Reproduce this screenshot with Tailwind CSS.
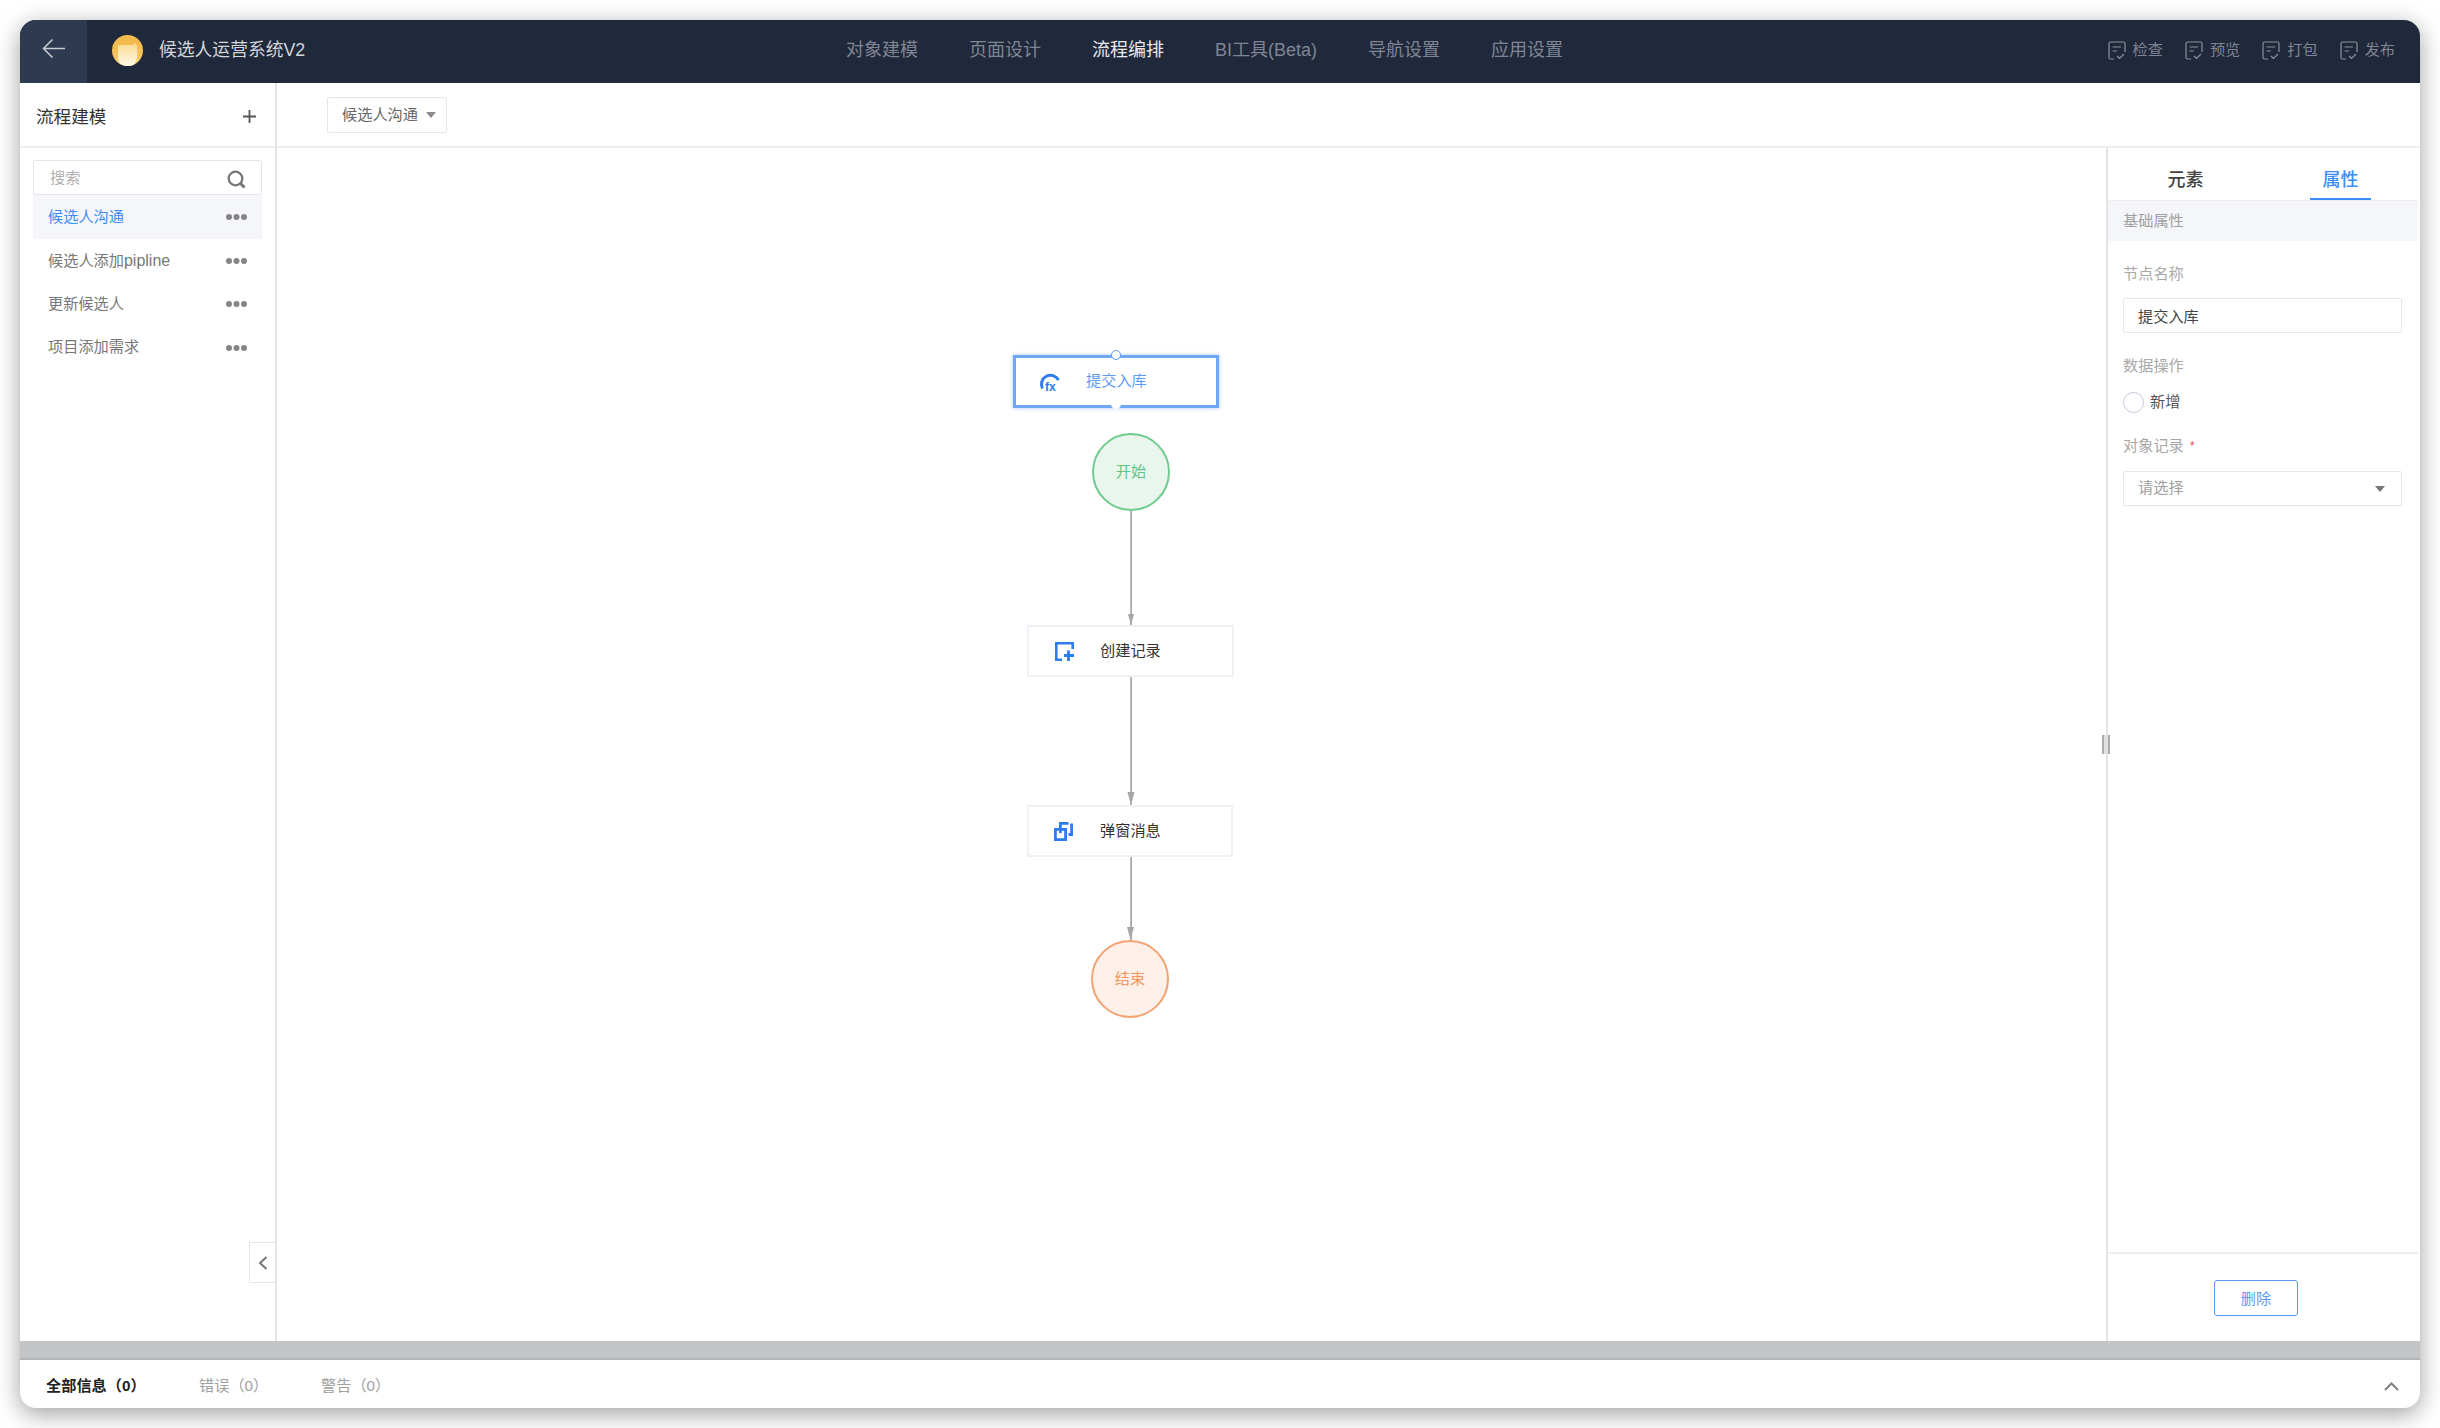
<!DOCTYPE html>
<html lang="zh-CN">
<head>
  <meta charset="UTF-8" />
  <title>候选人运营系统V2</title>
  <script src="https://cdn.jsdelivr.net/npm/@tailwindcss/browser@4"></script>
</head>
<body class="bg-white h-[1428px] w-[2440px] overflow-hidden font-['Liberation_Sans','Noto_Sans_CJK_SC',sans-serif] text-[15.2px] text-[#333]">
  <div class="mx-[20px] mt-[20px] w-[2400px] h-[1388px] rounded-[16px] bg-white flex flex-col overflow-hidden shadow-[0_6px_24px_rgba(0,0,0,0.38)]">

    <!-- Header -->
    <header class="h-[63px] shrink-0 bg-[#20293c] flex items-center">
      <div class="w-[67px] h-full bg-[#2e3a50] flex items-center justify-center pb-[6px]">
        <svg width="24" height="22" viewBox="0 0 24 22" fill="none" stroke="#c9ccd3" stroke-width="1.5"><path d="M23 10.5H2M10.5 1.5L1.5 10.5L10.5 19.5"/></svg>
      </div>
      <div class="w-[759px] flex items-center pl-[25px] pb-[2px]">
        <svg width="31" height="31" viewBox="0 0 31 31">
          <defs><linearGradient id="logo" x1="0" y1="0" x2="0" y2="1"><stop offset="0.3" stop-color="#f3bb4e"/><stop offset="1" stop-color="#f8cf72"/></linearGradient>
          <linearGradient id="paper" x1="0" y1="0" x2="0" y2="1"><stop offset="0" stop-color="#fbd98f"/><stop offset="1" stop-color="#fffbe9"/></linearGradient></defs>
          <circle cx="15.5" cy="15.5" r="15.5" fill="url(#logo)"/>
          <path d="M6 10h15l2-2 2 3v11q0 9-9 9h-2q-8-1-8-9z" fill="url(#paper)"/>
        </svg>
        <span class="ml-[16px] text-[17.8px] text-[#d4d6db]">候选人运营系统V2</span>
      </div>
      <nav class="flex items-center gap-[51px] text-[18px] text-[#7f8592] pb-[2px]">
        <a>对象建模</a>
        <a>页面设计</a>
        <a class="text-[#e9eaed]">流程编排</a>
        <a>BI工具(Beta)</a>
        <a>导航设置</a>
        <a>应用设置</a>
      </nav>
      <div class="ml-auto pr-[25px] pb-[2px] flex items-center gap-[22px] text-[#7f8592]">
        <div class="flex items-center gap-[7px]">
          <svg width="18" height="19" viewBox="0 0 18 19" fill="none" stroke="#8b909c" stroke-width="1.2"><path d="M6 18H2.5Q1 18 1 16.5V2.500Q1 1 2.500 1H15.500Q17 1 17 2.500V11M4.500 6H13M4.500 10H9M9 15L11.500 17.500L16 13"/></svg>
          <span>检查</span>
        </div>
        <div class="flex items-center gap-[7px]">
          <svg width="18" height="19" viewBox="0 0 18 19" fill="none" stroke="#8b909c" stroke-width="1.2"><path d="M6 18H2.5Q1 18 1 16.5V2.500Q1 1 2.500 1H15.500Q17 1 17 2.500V11M4.500 6H13M4.500 10H9M9 15L11.500 17.500L16 13"/></svg>
          <span>预览</span>
        </div>
        <div class="flex items-center gap-[7px]">
          <svg width="18" height="19" viewBox="0 0 18 19" fill="none" stroke="#8b909c" stroke-width="1.2"><path d="M6 18H2.5Q1 18 1 16.5V2.500Q1 1 2.500 1H15.500Q17 1 17 2.500V11M4.500 6H13M4.500 10H9M9 15L11.500 17.500L16 13"/></svg>
          <span>打包</span>
        </div>
        <div class="flex items-center gap-[7px]">
          <svg width="18" height="19" viewBox="0 0 18 19" fill="none" stroke="#8b909c" stroke-width="1.2"><path d="M6 18H2.5Q1 18 1 16.5V2.500Q1 1 2.500 1H15.500Q17 1 17 2.500V11M4.500 6H13M4.500 10H9M9 15L11.500 17.500L16 13"/></svg>
          <span>发布</span>
        </div>
      </div>
    </header>

    <!-- Body -->
    <div class="flex flex-1 min-h-0">

      <!-- Left sidebar -->
      <aside class="relative w-[257px] shrink-0 border-r-[2px] border-[#e4e4e4] flex flex-col">
        <div class="h-[65px] border-b-[2px] border-[#eeeeee] flex items-center justify-between pl-[16px] pr-[19px] pt-[3px]">
          <span class="text-[17.6px] text-[#333] mt-[3px]">流程建模</span>
          <svg width="13" height="13" viewBox="0 0 13 13" stroke="#555" stroke-width="1.8"><path d="M6.500 0V13M0 6.500H13"/></svg>
        </div>
        <div class="mx-[13px] mt-[12px]">
          <div class="h-[35px] border border-[#e2e4ec] rounded-[2px] flex items-center justify-between pl-[16px] pr-[15px]">
            <span class="text-[#b0b0b0] mt-[1px]">搜索</span>
            <svg class="mt-[4px]" width="19" height="19" viewBox="0 0 19 19" fill="none" stroke="#777" stroke-width="2.300"><circle cx="8.500" cy="8.500" r="6.800"/><path d="M13.500 13.500L17.500 17.500" stroke-width="3"/></svg>
          </div>
          <div class="h-[44px] bg-[#f5f6fa] flex items-center justify-between pl-[15px] pr-[15px] text-[#3d8cf5]">
            <span>候选人沟通</span>
            <svg width="21" height="6" viewBox="0 0 21 6" fill="#858585"><circle cx="3" cy="3" r="3"/><circle cx="10.500" cy="3" r="3"/><circle cx="18" cy="3" r="3"/></svg>
          </div>
          <div class="h-[43.500px] flex items-center justify-between pl-[15px] pr-[15px] text-[#777]">
            <span>候选人添加<span class="text-[16px]">pipline</span></span>
            <svg width="21" height="6" viewBox="0 0 21 6" fill="#858585"><circle cx="3" cy="3" r="3"/><circle cx="10.500" cy="3" r="3"/><circle cx="18" cy="3" r="3"/></svg>
          </div>
          <div class="h-[43.500px] flex items-center justify-between pl-[15px] pr-[15px] text-[#777]">
            <span>更新候选人</span>
            <svg width="21" height="6" viewBox="0 0 21 6" fill="#858585"><circle cx="3" cy="3" r="3"/><circle cx="10.500" cy="3" r="3"/><circle cx="18" cy="3" r="3"/></svg>
          </div>
          <div class="h-[43.500px] flex items-center justify-between pl-[15px] pr-[15px] text-[#777]">
            <span>项目添加需求</span>
            <svg width="21" height="6" viewBox="0 0 21 6" fill="#858585"><circle cx="3" cy="3" r="3"/><circle cx="10.500" cy="3" r="3"/><circle cx="18" cy="3" r="3"/></svg>
          </div>
        </div>
        <!-- collapse tab -->
        <div class="absolute right-0 top-[1159px] w-[26px] h-[41px] bg-white border border-r-0 border-[#e4e4e4] flex items-center justify-center">
          <svg width="10" height="14" viewBox="0 0 10 14" fill="none" stroke="#777" stroke-width="2"><path d="M8.500 1L2 7L8.500 13"/></svg>
        </div>
      </aside>

      <div class="flex-1 min-w-0 flex flex-col">
        <!-- Toolbar -->
        <div class="h-[65px] shrink-0 border-b-[2px] border-[#eeeeee] pl-[50px] pt-[14px]">
          <div class="w-[120px] h-[36px] border-[1.5px] border-[#e6e7ee] rounded-[2px] flex items-center pl-[14px] gap-[8px] text-[#666]">
            <span>候选人沟通</span>
            <svg width="10" height="6" viewBox="0 0 10 6" fill="#8a8a8a"><path d="M0 0H10L5 6Z"/></svg>
          </div>
        </div>

        <div class="flex-1 min-h-0 flex">
          <!-- Flow canvas -->
          <div class="relative flex-1 min-w-0">
            <svg class="absolute left-0 top-0" width="1100" height="900" fill="#a6a6a6" stroke="none">
              <rect x="853.200" y="363" width="1.800" height="114" fill="#aaaaaa"/>
              <path d="M851 466H857L854 477Z"/>
              <rect x="853.200" y="529" width="1.800" height="128" fill="#aaaaaa"/>
              <path d="M850.500 644H857.500L854 657Z"/>
              <rect x="853.200" y="709" width="1.800" height="83" fill="#aaaaaa"/>
              <path d="M850 779H857L853.500 792Z"/>
            </svg>

            <!-- selected node -->
            <div class="absolute left-[736px] top-[207px] w-[206px] h-[53px] border-[3px] border-[#6ea7f7] shadow-[0_0_4px_rgba(80,140,245,0.45)] bg-white flex items-center pl-[23px] text-[#5b9bf5]">
              <svg class="mt-[3px]" width="21" height="24" viewBox="0 0 21 24" fill="none" color="#2f7cf0">
                <path d="M3.500 17.500A9 9 0 1 1 19.500 9" stroke="currentColor" stroke-width="3"/>
                <text x="6" y="19.500" font-size="12" font-weight="700" font-family="Liberation Sans" fill="currentColor">fx</text>
              </svg>
              <span class="ml-[26px]">提交入库</span>
              <span class="absolute left-[95px] top-[-8px] w-[10px] h-[10px] rounded-full bg-white border-[1.5px] border-[#5b9bf5]"></span>
              <span class="absolute left-[95px] top-[41px] w-[10px] h-[10px] rounded-full bg-white"></span>
            </div>

            <div class="absolute left-[815px] top-[285px] w-[78px] h-[78px] rounded-full bg-[#e9f6ee] border-[2px] border-[#6fcb8e] flex items-center justify-center text-[#62c585]">开始</div>

            <div class="absolute left-[750px] top-[477px] w-[207px] h-[52px] border-[2px] border-[#f0f1f6] bg-white flex items-center pl-[26px] text-[#333]">
              <svg width="19" height="19" viewBox="0 0 19 19" fill="none" stroke="#2f7cf0" stroke-width="2.600">
                <path d="M7 17.700H1.300V1.300H17.700V7"/>
                <path d="M9 13.500H19M13.500 8.500V19" stroke-width="2.800"/>
              </svg>
              <span class="ml-[26px]">创建记录</span>
            </div>

            <div class="absolute left-[750px] top-[657px] w-[206px] h-[52px] border-[2px] border-[#f0f1f6] bg-white flex items-center pl-[25px] text-[#333]">
              <svg width="19" height="19" viewBox="0 0 19 19" fill="none" stroke="#2f7cf0" stroke-width="2.800">
                <path d="M1.400 7.400H11.600V17.600H1.400Z"/>
                <path d="M6.400 11V1.400H14.500M17.600 1.400V12.500H14.500M17.600 3.500V6" />
              </svg>
              <span class="ml-[27px]">弹窗消息</span>
            </div>

            <div class="absolute left-[814px] top-[792px] w-[78px] h-[78px] rounded-full bg-[#fdf0e8] border-[2px] border-[#f5a273] flex items-center justify-center text-[#f2955f]">结束</div>
          </div>

          <!-- Right properties panel -->
          <aside class="relative w-[314px] shrink-0 border-l-[2px] border-[#e4e4e4] pr-[2px] flex flex-col">
            <span class="absolute left-[-6px] top-[587px] w-[8px] h-[19px] bg-[#e2e2e2] border-x-[2px] border-[#ababab]"></span>
            <div class="h-[53px] shrink-0 flex border-b-[1.500px] border-[#eeeeee] text-[18px] font-medium">
              <div class="w-1/2 flex items-center justify-center text-[#444] pt-[13px]">元素</div>
              <div class="w-1/2 relative flex items-center justify-center text-[#3d8cf5] pt-[13px]">
                属性
                <span class="absolute left-[47px] bottom-[0px] w-[61px] h-[2.500px] bg-[#3d8cf5]"></span>
              </div>
            </div>
            <div class="h-[40px] shrink-0 bg-[#f5f6fa] flex items-center pl-[15px] text-[#a0a0a0]">基础属性</div>
            <div class="flex-1 min-h-0 px-[15px]">
              <div class="mt-[23px] h-[20px] flex items-center text-[#a8a8a8]">节点名称</div>
              <div class="mt-[14px] w-[279px] h-[35px] border border-[#e5e6ee] rounded-[2px] flex items-center pl-[14px] pt-[3px] text-[#444]">提交入库</div>
              <div class="mt-[23px] h-[20px] flex items-center text-[#a8a8a8]">数据操作</div>
              <div class="mt-[16px] h-[21px] flex items-center gap-[6px] text-[#555]">
                <span class="w-[21px] h-[21px] rounded-full border-[1.500px] border-[#c3c9d8]"></span>
                <span>新增</span>
              </div>
              <div class="mt-[23px] h-[20px] flex items-center text-[#a8a8a8]">对象记录<span class="ml-[6px] text-[#e65a5a] text-[13px]">*</span></div>
              <div class="mt-[15px] w-[279px] h-[35px] border border-[#e5e6ee] rounded-[2px] flex items-center justify-between pl-[14px] pr-[16px] text-[#a0a0a0]">
                <span>请选择</span>
                <svg width="10" height="6" viewBox="0 0 10 6" fill="#777"><path d="M0 0H10L5 6Z"/></svg>
              </div>
            </div>
            <div class="h-[89px] shrink-0 border-t-[2px] border-[#eeeeee] pl-[106px] pt-[26px]">
              <div class="w-[84px] h-[36px] border-[1.500px] border-[#5b9bf5] rounded-[3px] flex items-center justify-center pt-[2px] text-[#5b9bf5]">删除</div>
            </div>
          </aside>
        </div>
      </div>
    </div>

    <!-- Resize bar -->
    <div class="h-[19px] shrink-0 bg-[#c4c5c7] border-b-[2px] border-[#b4b5b7]"></div>

    <!-- Bottom message tabs -->
    <div class="h-[48px] shrink-0 flex items-center pl-[26px] pr-[21px] pt-[5px] text-[#a0a0a0]">
      <span class="w-[153px] font-bold text-[#222]">全部信息（0）</span>
      <span class="w-[122px]">错误（0）</span>
      <span>警告（0）</span>
      <svg class="ml-auto" width="15" height="9" viewBox="0 0 15 9" fill="none" stroke="#808080" stroke-width="2"><path d="M1 8L7.500 1.500L14 8"/></svg>
    </div>
  </div>
</body>
</html>
